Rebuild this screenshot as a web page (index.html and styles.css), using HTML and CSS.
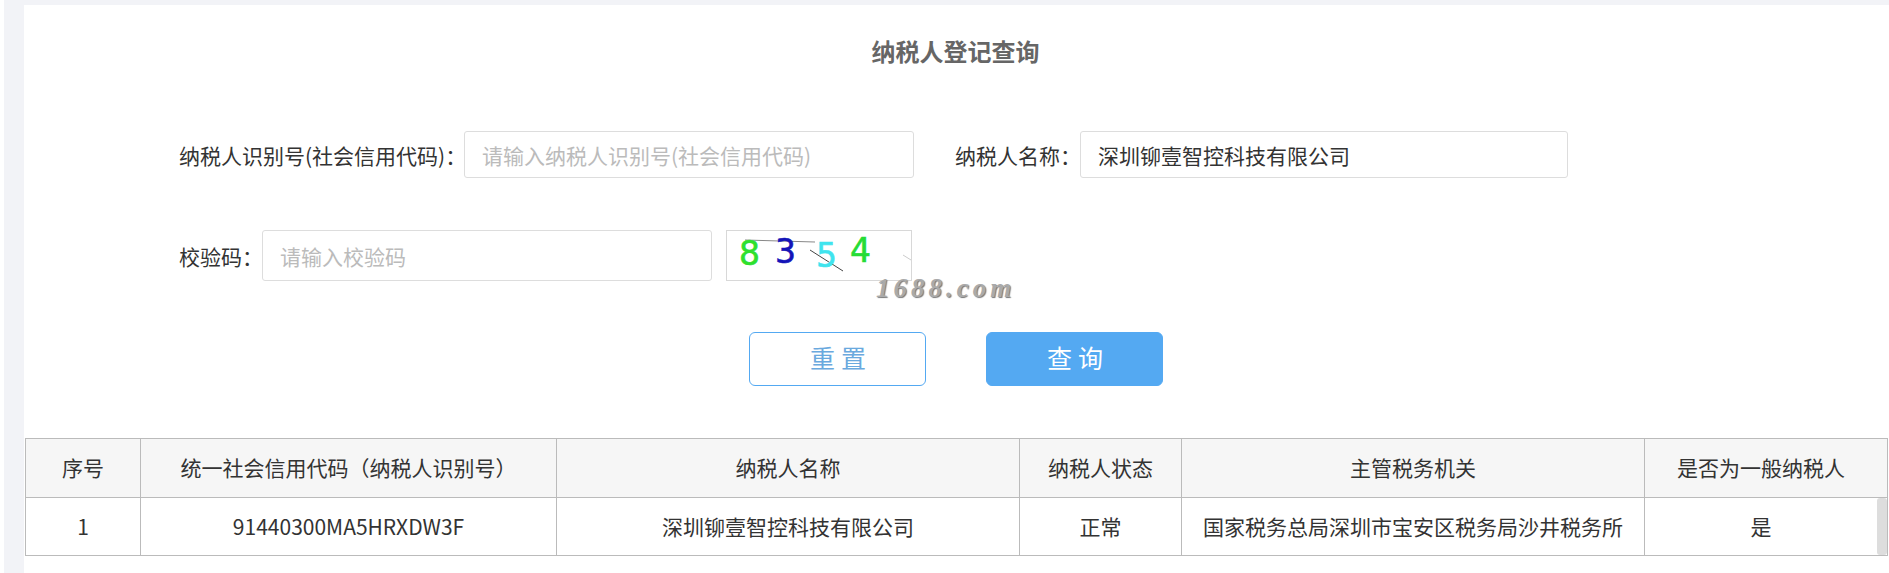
FILE: index.html
```html
<!DOCTYPE html>
<html lang="zh-CN">

<head>
    <meta charset="utf-8">
    <title>纳税人登记查询</title>
    <link rel="stylesheet" href="styles.css">
</head>

<body>
    <div class="panel">
        <h1>纳税人登记查询</h1>
        <form class="search-form">
            <div class="form-row first-row">
                <label class="label-code" for="code">纳税人识别号(社会信用代码)：</label>
                <input class="input-code" id="code" type="text" placeholder="请输入纳税人识别号(社会信用代码)">
                <label class="label-name" for="name">纳税人名称：</label>
                <input class="input-name" id="name" type="text" value="深圳铆壹智控科技有限公司">
            </div>
            <div class="form-row second-row">
                <label class="label-check" for="check">校验码：</label>
                <input class="input-check" id="check" type="text" placeholder="请输入校验码">
                <div class="captcha">
                    <svg width="184" height="49" viewBox="0 0 184 49">
                        <line x1="18" y1="9" x2="88" y2="11" stroke="#888" stroke-width="1" />
                        <line x1="83" y1="19" x2="116" y2="40" stroke="#444" stroke-width="1" />
                        <line x1="176" y1="24" x2="184" y2="29" stroke="#ccc" stroke-width="1" />
                        <text x="12" y="34" fill="#2ee02e" stroke="#2ee02e">8</text>
                        <text x="48" y="32" fill="#1414b8" stroke="#1414b8">3</text>
                        <text x="89" y="36" fill="#3fe4ee" stroke="#3fe4ee">5</text>
                        <text x="123" y="31" fill="#26dc36" stroke="#26dc36">4</text>
                    </svg>
                </div>
            </div>
            <span class="watermark">1688.com</span>
            <div class="form-actions">
                <button class="btn btn-reset" type="reset">重置</button>
                <button class="btn btn-search" type="button">查询</button>
            </div>
        </form>
        <div class="result">
            <table class="result-table">
                <colgroup>
                    <col class="col-no">
                    <col class="col-code">
                    <col class="col-name">
                    <col class="col-status">
                    <col class="col-office">
                    <col class="col-general">
                </colgroup>
                <thead>
                    <tr>
                        <th>序号</th>
                        <th>统一社会信用代码（纳税人识别号）</th>
                        <th>纳税人名称</th>
                        <th>纳税人状态</th>
                        <th>主管税务机关</th>
                        <th>是否为一般纳税人</th>
                    </tr>
                </thead>
                <tbody>
                    <tr>
                        <td>1</td>
                        <td>91440300MA5HRXDW3F</td>
                        <td>深圳铆壹智控科技有限公司</td>
                        <td>正常</td>
                        <td>国家税务总局深圳市宝安区税务局沙井税务所</td>
                        <td>是</td>
                    </tr>
                </tbody>
            </table>
            <div class="scroll-thumb"></div>
        </div>
    </div>
</body>

</html>
```

FILE: styles.css
```css
* {
    box-sizing: border-box;
    font-family: "Noto Sans CJK SC", "Liberation Sans", sans-serif;
}

html,
body {
    height: 573px;
    overflow: hidden;
}

body {
    margin: 0;
    padding: 5px 0 0 20px;
    border-left: 4px solid #ffffff;
    background-color: #f2f3f7;
    color: #333333;
    position: relative;
}

body::before {
    content: "";
    position: absolute;
    left: -4px;
    top: 189px;
    width: 2px;
    height: 3px;
    background-color: #777777;
}

.panel {
    background-color: #ffffff;
    height: 568px;
}

h1 {
    margin: 0;
    padding: 28px 2px 0 0;
    height: 126px;
    text-align: center;
    font-size: 24px;
    line-height: 36px;
    font-weight: bold;
    color: #666666;
}

.search-form {
    position: relative;
    padding-left: 155px;
}

.form-row {
    display: flex;
    align-items: center;
}

.first-row {
    height: 47px;
}

.second-row {
    height: 51px;
    margin-top: 52px;
}

label {
    font-size: 21px;
    white-space: nowrap;
    color: #333333;
}

input {
    height: 100%;
    padding: 0 17px;
    border: 1px solid #dddddd;
    border-radius: 3px;
    font-size: 21px;
    color: #333333;
    background-color: #ffffff;
}

input::placeholder {
    color: #bbbbbb;
}

.label-code {
    width: 285px;
}

.input-code {
    width: 450px;
}

.label-name {
    width: 125px;
    margin-left: 41px;
}

.input-name {
    width: 488px;
}

.label-check {
    width: 83px;
}

.input-check {
    width: 450px;
}

.captcha {
    width: 186px;
    height: 100%;
    margin-left: 14px;
    border: 1px solid #d8d8d8;
}

.captcha svg {
    display: block;
    overflow: visible;
}

.captcha text {
    font-family: "DejaVu Sans", sans-serif;
    font-size: 33px;
    stroke-width: 0.6px;
}

.watermark {
    position: absolute;
    left: 852px;
    top: 142px;
    font-family: "Liberation Serif", serif;
    font-style: italic;
    font-weight: bold;
    font-size: 27px;
    letter-spacing: 4px;
    color: #aaaaaa;
    text-shadow: 1px 1px 1px #777777;
}

.form-actions {
    display: flex;
    gap: 60px;
    margin-top: 51px;
    padding-left: 570px;
}

.btn {
    width: 177px;
    height: 54px;
    padding: 0 0 4px 7px;
    border: 1px solid #54a9f2;
    border-radius: 6px;
    font-size: 25px;
    letter-spacing: 6px;
}

.btn-reset {
    background-color: #ffffff;
    color: #6aa9de;
}

.btn-search {
    background-color: #54a9f2;
    color: #ffffff;
}

.result {
    position: relative;
    margin-top: 52px;
    margin-left: 1px;
    width: 1862px;
}

.result-table {
    width: 1862px;
    table-layout: fixed;
    border-collapse: collapse;
    font-size: 21px;
}

.col-no {
    width: 115px;
}

.col-code {
    width: 416px;
}

.col-name {
    width: 463px;
}

.col-status {
    width: 162px;
}

.col-office {
    width: 463px;
}

.col-general {
    width: 243px;
}

th,
td {
    height: 58px;
    padding: 0 0 2px;
    border: 1px solid #bbbbbb;
    text-align: center;
    font-weight: normal;
    color: #333333;
}

th:last-child,
td:last-child {
    padding-right: 10px;
}

th {
    height: 59px;
    background-color: #f6f6f6;
}

.scroll-thumb {
    position: absolute;
    right: 0;
    top: 60px;
    width: 10px;
    height: 57px;
    border-radius: 3px;
    background-color: #dddddd;
}
```
